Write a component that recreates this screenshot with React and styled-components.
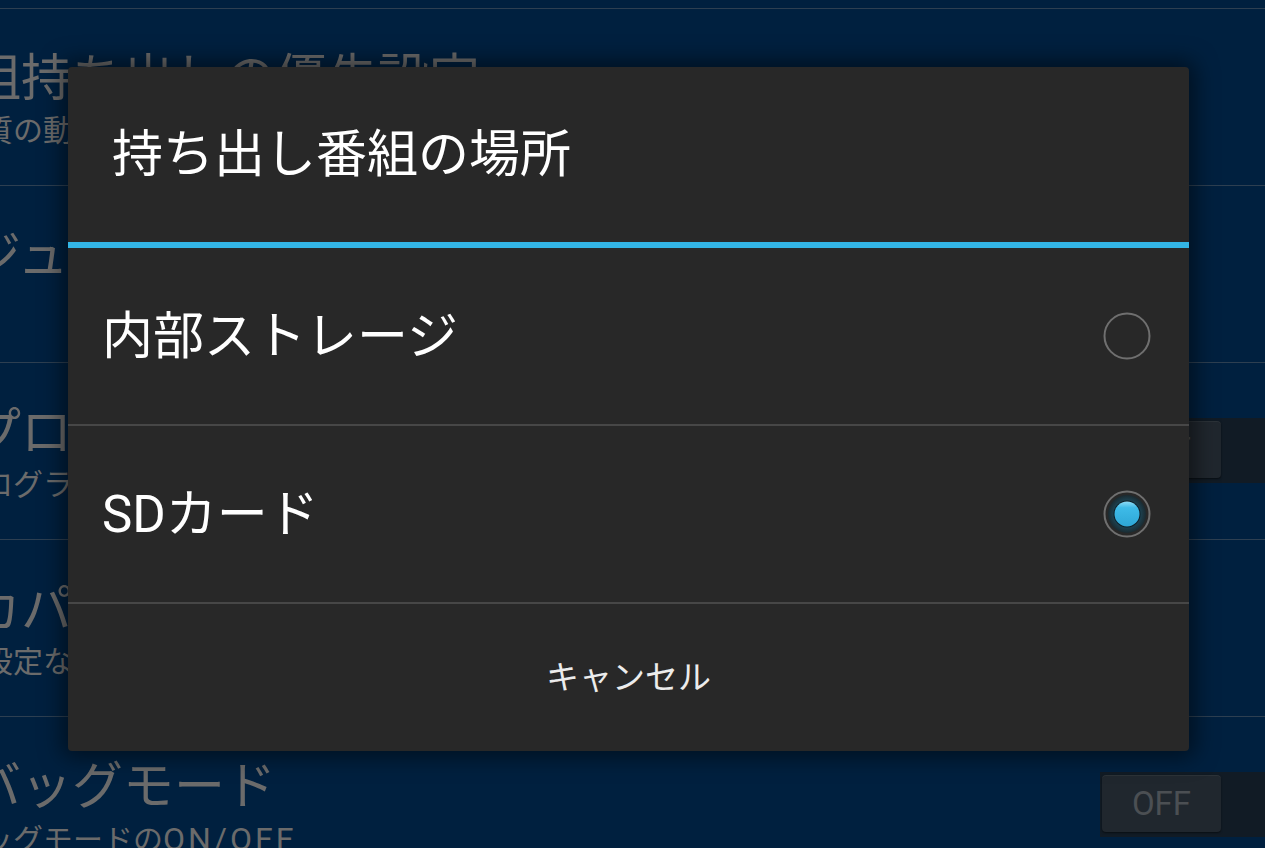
import React from "react";
import styled, { createGlobalStyle } from "styled-components";

const GlobalStyle = createGlobalStyle`
  html, body {
    margin: 0;
    padding: 0;
    background: #00203f;
  }
  body {
    font-family: Roboto, "Noto Sans CJK JP", sans-serif;
    overflow: hidden;
  }
`;

const Screen = styled.div`
  position: relative;
  width: 1265px;
  height: 848px;
  overflow: hidden;
  background: #00203f;
`;

const List = styled.div`
  display: flex;
  flex-direction: column;
  padding-top: 8px;
`;

const Row = styled.div`
  box-sizing: border-box;
  height: 177px;
  border-top: 1px solid #2d3f51;
  display: flex;
  align-items: flex-start;
`;

const TextBlock = styled.div`
  margin-left: -81px;
  padding-top: 44px;
  display: flex;
  flex-direction: column;
`;

const RowTitle = styled.div`
  font-size: 51px;
  line-height: 51px;
  color: #6b6b6b;
  white-space: nowrap;
`;

const RowSub = styled.div`
  margin-top: 12px;
  margin-left: 4px;
  font-size: 30px;
  line-height: 30px;
  color: #6b6b6b;
  white-space: nowrap;
`;

const Latin = styled.span`
  font-size: 32px;
  letter-spacing: 3px;
`;

const Track = styled.div`
  box-sizing: border-box;
  margin-left: auto;
  margin-top: 55px;
  width: 165px;
  height: 65px;
  padding: 3px 0 0 2px;
  background: #111b25;
`;

const ToggleButton = styled.div`
  width: 119px;
  height: 57px;
  border-radius: 4px;
  background: #20272e;
  box-shadow: inset 0 1px 0 rgba(255, 255, 255, 0.05), 0 1px 2px rgba(0, 0, 0, 0.5);
  display: flex;
  align-items: center;
  justify-content: center;
  font-family: Roboto, sans-serif;
  font-size: 33px;
  color: #4b4f53;
`;

const Dialog = styled.div`
  position: absolute;
  left: 68px;
  top: 67px;
  width: 1121px;
  height: 684px;
  background: #282828;
  border-radius: 4px;
  box-shadow: 0 0 22px 6px rgba(0, 0, 0, 0.5);
  display: flex;
  flex-direction: column;
  overflow: hidden;
`;

const DialogTitle = styled.div`
  height: 175px;
  flex: none;
  display: flex;
  align-items: center;
  padding-left: 44px;
  font-size: 51px;
  line-height: 51px;
  color: #ffffff;
`;

const Accent = styled.div`
  height: 6px;
  flex: none;
  background: #33b5e5;
`;

const Option = styled.div`
  height: 176px;
  flex: none;
  display: flex;
  align-items: center;
  justify-content: space-between;
  padding: 0 38px 0 34px;
  font-size: 51px;
  line-height: 51px;
  color: #ffffff;
`;

const Divider = styled.div`
  height: 2px;
  flex: none;
  background: #474747;
`;

const CancelButton = styled.div`
  flex: 1;
  display: flex;
  align-items: center;
  justify-content: center;
  font-size: 33px;
  line-height: 33px;
  color: #ececec;
`;

const Radio = ({ checked }) => (
  <svg width="48" height="48" viewBox="0 0 48 48">
    <defs>
      <radialGradient id="halo" cx="50%" cy="50%" r="50%">
        <stop offset="60%" stopColor="#1d4a5c" />
        <stop offset="100%" stopColor="#1b2a30" />
      </radialGradient>
      <linearGradient id="dot" x1="0" y1="0" x2="0" y2="1">
        <stop offset="0%" stopColor="#8fdcf6" />
        <stop offset="25%" stopColor="#3ebbe8" />
        <stop offset="100%" stopColor="#2ea7d6" />
      </linearGradient>
    </defs>
    {checked && <circle cx="24" cy="24" r="19" fill="url(#halo)" />}
    <circle cx="24" cy="24" r="22.5" fill="none" stroke="#6f6f6f" strokeWidth="2" />
    {checked && (
      <>
        <circle cx="24" cy="24" r="13.5" fill="#0e1e26" />
        <circle cx="24" cy="24" r="12.5" fill="url(#dot)" />
      </>
    )}
  </svg>
);

const rows = [
  { title: "番組持ち出しの優先設定", sub: "高画質の動画を優先して持ち出す" },
  { title: "モジュール情報" },
  { title: "全プログラム表示", sub: "全プログラムを表示します", toggle: true },
  { title: "スカパー！プレミアムサービス", sub: "各種設定などを行います" },
  {
    title: "デバッグモード",
    sub: (
      <>
        デバッグモードの<Latin>ON/OFF</Latin>
      </>
    ),
    toggle: true,
  },
];

export default function App() {
  return (
    <>
      <GlobalStyle />
      <Screen>
        <List>
          {rows.map((r) => (
            <Row key={r.title}>
              <TextBlock>
                <RowTitle>{r.title}</RowTitle>
                {r.sub && <RowSub>{r.sub}</RowSub>}
              </TextBlock>
              {r.toggle && (
                <Track>
                  <ToggleButton>OFF</ToggleButton>
                </Track>
              )}
            </Row>
          ))}
        </List>
        <Dialog>
          <DialogTitle>持ち出し番組の場所</DialogTitle>
          <Accent />
          <Option>
            <span>内部ストレージ</span>
            <Radio checked={false} />
          </Option>
          <Divider />
          <Option>
            <span>SDカード</span>
            <Radio checked />
          </Option>
          <Divider />
          <CancelButton>キャンセル</CancelButton>
        </Dialog>
      </Screen>
    </>
  );
}
